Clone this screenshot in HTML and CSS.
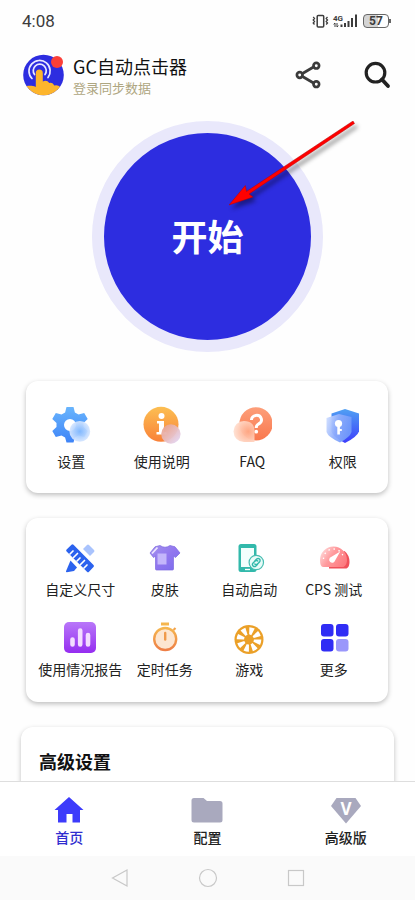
FILE: index.html
```
<!DOCTYPE html>
<html lang="zh-CN">
<head>
<meta charset="utf-8">
<meta name="viewport" content="width=device-width, initial-scale=1">
<title>GC自动点击器</title>
<link rel="stylesheet" href="styles.css">
</head>

<body>
<div class="statusbar">
  <span class="time">4:08</span>
  <div class="status-icons">
    <svg width="48" height="16" viewBox="0 0 48 16">
      <g fill="none" stroke="#3c3c3c">
        <rect x="5.200" y="2.500" width="6.500" height="11.500" rx="1" stroke-width="1.500"/>
        <path d="M1.200 4l1.300 1.500L1.200 7l1.300 1.500L1.200 10l1.300 1.500M15.500 4l-1.300 1.500L15.500 7l-1.300 1.500 1.300 1.500-1.300 1.500" stroke-width="1.300"/>
        <path d="M23 10v4M21.600 11.300L23 10M25 10v4M26.400 12.700L25 14" stroke-width="1"/>
      </g>
      <text class="net" x="21" y="8">4G</text>
      <path d="M28.500 11.500h2V14h-2zM32 10h2v4h-2zM35.500 8h2v6h-2zM39 5h2v9h-2zM43 1.500h2V14h-2z" fill="#3c3c3c"/>
    </svg>
    <span class="battery">57</span>
  </div>
</div>

<main class="content">
  <header class="header">
    <svg class="logo" width="41" height="42" viewBox="0 0 41 42">
      <defs><clipPath id="disc"><circle cx="20.500" cy="21" r="20.300"/></clipPath></defs>
      <circle cx="20.500" cy="21" r="20.300" fill="#2d2de0"/>
      <g fill="none" stroke="#e9e9ff" stroke-width="1.700" stroke-linecap="round">
        <path d="M9 24.500a10.600 10.600 0 1 1 16-1"/>
        <path d="M11.500 20.500a6.500 6.500 0 1 1 10.500 0"/>
      </g>
      <g clip-path="url(#disc)">
        <path d="M0 42V33c4-1 8-2 12.800 0V19a3.500 3.500 0 0 1 7 0v8.500q4-2 6.500 1.500 3.500-1 5 2.500 3.500-1 6 1.500V42z" fill="#fdb52c"/>
      </g>
      <circle cx="34" cy="8" r="6" fill="#fb3f38"/>
    </svg>
    <div class="account">
      <h1>GC自动点击器</h1>
      <a href="#">登录同步数据</a>
    </div>
    <button class="icon-btn" aria-label="分享">
      <svg width="28" height="28" viewBox="0 0 28 28" fill="none" stroke="#3b3b3b" stroke-width="2.700">
        <path d="M8.500 12.500l11-6.500M8.500 15.500l11 6.500"/>
        <circle cx="5.700" cy="14" r="2.800"/><circle cx="22.300" cy="4.700" r="2.800"/><circle cx="22.300" cy="23.200" r="2.800"/>
      </svg>
    </button>
    <button class="icon-btn" aria-label="搜索">
      <svg width="28" height="28" viewBox="0 0 28 28" fill="none" stroke="#222">
        <circle cx="12.500" cy="11.700" r="9.300" stroke-width="3.200"/>
        <path d="M19 18.500l6 6.500" stroke-width="3.800" stroke-linecap="round"/>
      </svg>
    </button>
  </header>

  <div class="start-area">
    <button class="start">开始</button>
    <svg class="pointer" width="136" height="96" viewBox="0 0 136 96">
      <path d="M124 0L17.500 70.500l-1.200-6L0 84l24-8-4-3L125.500 2.500z" fill="#f00" stroke="#b40000" stroke-width=".5"/>
    </svg>
  </div>

  <nav class="card tools">
    <a href="#" class="item">
      <svg width="40" height="40" viewBox="0 0 40 40">
        <defs>
          <linearGradient id="gear" gradientUnits="userSpaceOnUse" x1="0" y1="3" x2="0" y2="39"><stop stop-color="#69b5fd"/><stop offset="1" stop-color="#3d83f7"/></linearGradient>
          <radialGradient id="gearBlob"><stop stop-color="#85bbff"/><stop offset="1" stop-color="#d6e6ff"/></radialGradient>
        </defs>
        <path fill="url(#gear)" fill-rule="evenodd" d="M15.500 3h7l1.400 5.500 3.600 2.100 5.700-1.700 3.500 6.100-4.200 4v4l4.200 4-3.500 6.100-5.700-1.600-3.600 2.100-1.400 4.900h-7l-1.400-4.900-3.600-2.100-5.700 1.600L1.300 27l4.200-4v-4l-4.200-4 3.500-6.100 5.700 1.700 3.600-2.100zM19 15a6 6 0 1 0 0 12 6 6 0 0 0 0-12z"/>
        <circle cx="28.800" cy="27.400" r="10.400" fill="url(#gearBlob)" opacity=".94"/>
      </svg>
      <span>设置</span>
    </a>
    <a href="#" class="item">
      <svg width="40" height="40" viewBox="0 0 40 40">
        <defs>
          <linearGradient id="info" x2="0" y2="1"><stop stop-color="#fcbf52"/><stop offset="1" stop-color="#f98138"/></linearGradient>
          <linearGradient id="infoBlob" x2="1" y2="1"><stop stop-color="#eb9d82"/><stop offset="1" stop-color="#e3dcff"/></linearGradient>
        </defs>
        <circle cx="19" cy="20.300" r="17.500" fill="url(#info)"/>
        <circle cx="19.500" cy="12" r="3" fill="#fff"/>
        <path d="M15 17h7v11h2.500v2.500H14.500V28H17v-8.500h-2z" fill="#fff"/>
        <circle cx="28.900" cy="30" r="9.700" fill="url(#infoBlob)" opacity=".95"/>
      </svg>
      <span>使用说明</span>
    </a>
    <a href="#" class="item">
      <svg width="40" height="40" viewBox="0 0 40 40">
        <defs>
          <linearGradient id="faq" x2="0" y2="1"><stop stop-color="#fd9f7a"/><stop offset="1" stop-color="#f9784e"/></linearGradient>
          <radialGradient id="faqBlob" cx=".7" cy=".5" r=".7"><stop stop-color="#ffa784"/><stop offset="1" stop-color="#ffe1d3"/></radialGradient>
        </defs>
        <circle cx="24" cy="19.800" r="16.600" fill="url(#faq)"/>
        <path d="M19.500 16a5 4.500 0 1 1 7 4q-2.300 1.200-2.300 4" fill="none" stroke="#fff" stroke-width="3"/>
        <circle cx="24.200" cy="27.700" r="1.900" fill="#fff"/>
        <path d="M12 17q10.500 0 10.500 10.500V38H12A10.500 10.500 0 0 1 12 17z" fill="url(#faqBlob)" opacity=".96"/>
      </svg>
      <span>FAQ</span>
    </a>
    <a href="#" class="item">
      <svg width="40" height="40" viewBox="0 0 40 40">
        <defs>
          <linearGradient id="shield" x2="0" y2="1"><stop stop-color="#50a0f3"/><stop offset="1" stop-color="#3c3efc"/></linearGradient>
          <linearGradient id="shieldFront" x2="1" y2=".3"><stop stop-color="#d5e2ff"/><stop offset=".5" stop-color="#8eadfc"/><stop offset="1" stop-color="#719afa"/></linearGradient>
        </defs>
        <path d="M22 5l14 4.500v18Q34 33 22 39 10 33 8.500 27.500v-18z" fill="url(#shield)"/>
        <path d="M16 10l12.500 3v15Q27 33 17 38.500 5 33 3.500 28V14z" fill="url(#shieldFront)" opacity=".95"/>
        <circle cx="15.500" cy="19.500" r="3.600" fill="#fff"/>
        <path d="M14.300 22h2.600v3h1.900v2h-1.900v3.500h-2.600z" fill="#fff"/>
      </svg>
      <span>权限</span>
    </a>
  </nav>

  <nav class="card features">
    <a href="#" class="item">
      <svg width="34" height="34" viewBox="0 0 34 34">
        <path d="M20 8l4-4q1-1 2 0l5 5q1 1 0 2l-4 4z" fill="#a9c3fd"/>
        <path d="M7.500 19.500l6.500 7-3 3.500-7.200 1.200q-1 0-.8-1z" fill="#2b62ee"/>
        <path d="M8.500 3.700q1-1 2 0L30.500 24q1 1 0 2l-4.500 4.700q-1 1-2 0L3.600 10.400q-1-1 0-2z" fill="#2b62ee"/>
        <path d="M7 13l3-3M10.500 16.500l4-4M14 20l3-3M17.500 23.500l4-4M21 27l3-3" stroke="#fff" stroke-width="1.700" stroke-linecap="round"/>
      </svg>
      <span>自定义尺寸</span>
    </a>
    <a href="#" class="item">
      <svg width="34" height="34" viewBox="0 0 34 34">
        <defs><linearGradient id="shirt" x2="1" y2="1"><stop stop-color="#a493ee"/><stop offset=".5" stop-color="#9277ef"/><stop offset="1" stop-color="#796bed"/></linearGradient></defs>
        <path d="M12 4.500q5 3.500 10 0l5 1.300 5 6.200-4.500 4.500-2-1.500V28q0 1-1 1h-16q-1 0-1-1V15l-2 1.500L2 12l5-6.200z" fill="url(#shirt)" stroke="#7d68df" stroke-width=".7"/>
        <path d="M4 12.500l5.500-6" stroke="#eee7ff" stroke-width="1.800"/>
        <rect x="9.500" y="12.500" width="9" height="11" fill="#c4b6fb"/>
      </svg>
      <span>皮肤</span>
    </a>
    <a href="#" class="item">
      <svg width="34" height="34" viewBox="0 0 34 34">
        <rect x="6.500" y="3" width="18" height="28" rx="2.500" fill="#32b9ab"/>
        <rect x="9" y="7" width="13" height="19" fill="#f2fffd"/>
        <path d="M13 28.500h5" stroke="#fff" stroke-width="1.300"/>
        <circle cx="24.300" cy="21.500" r="7.200" fill="#e8fbf8" stroke="#48bdb1" stroke-width="1.200"/>
        <g fill="none" stroke="#32b9ab" stroke-width="1.400" stroke-linecap="round">
          <path d="M23.200 19.600l1.500-1.500a1.900 1.900 0 0 1 2.800 2.800l-2 2a1.900 1.900 0 0 1-2.700 0"/>
          <path d="M25.400 23.400l-1.500 1.500a1.900 1.900 0 0 1-2.800-2.800l2-2a1.900 1.900 0 0 1 2.700 0"/>
        </g>
      </svg>
      <span>自动启动</span>
    </a>
    <a href="#" class="item">
      <svg width="34" height="34" viewBox="0 0 34 34">
        <defs><linearGradient id="gauge" x1="0" y1=".2" x2="1" y2=".7"><stop stop-color="#ffdcdc"/><stop offset=".45" stop-color="#ff9a9d"/><stop offset="1" stop-color="#fd7a7f"/></linearGradient></defs>
        <path d="M12 27.500V20l15.500-10Q32.500 14 32.500 21q0 5-3 6.500z" fill="#f0505a"/>
        <path d="M6 26Q3 26 3 19a13.500 13.500 0 0 1 27 0q0 5-3.500 7z" fill="url(#gauge)"/>
        <path d="M6.500 18a10 10 0 0 1 20 0" fill="none" stroke="#fff" stroke-width="1.300" stroke-dasharray="1.500 3.700"/>
        <path d="M23.200 10.500l-5.100 9a3 3 0 1 1-4-3.500z" fill="#fff"/>
      </svg>
      <span>CPS 测试</span>
    </a>
    <a href="#" class="item">
      <svg width="34" height="34" viewBox="0 0 34 34">
        <defs><linearGradient id="chart" x2="0" y2="1"><stop stop-color="#b877f9"/><stop offset="1" stop-color="#952df0"/></linearGradient></defs>
        <rect x="1" y="1" width="32" height="31" rx="5" fill="url(#chart)"/>
        <path d="M9.500 18.500v5M17.200 9.500v14M25 14v9.500" stroke="#f3ddff" stroke-width="4.600" stroke-linecap="round"/>
      </svg>
      <span>使用情况报告</span>
    </a>
    <a href="#" class="item">
      <svg width="34" height="34" viewBox="0 0 34 34">
        <defs><linearGradient id="timer" x2="0" y2="1"><stop stop-color="#f5b64f"/><stop offset="1" stop-color="#ee7f46"/></linearGradient></defs>
        <path d="M13 1.500h8v3h-8z" fill="#f5b64f"/>
        <path d="M25.500 9l2-2" stroke="#f3a34b" stroke-width="2.200"/>
        <circle cx="17.200" cy="18" r="11" fill="#fde6d1" stroke="url(#timer)" stroke-width="2.400"/>
        <path d="M17.200 12v6.500" stroke="#f09a4b" stroke-width="2.400" stroke-linecap="round"/>
      </svg>
      <span>定时任务</span>
    </a>
    <a href="#" class="item">
      <svg width="34" height="34" viewBox="0 0 34 34">
        <circle cx="17" cy="18.500" r="14.500" fill="#eba028"/>
        <circle cx="17" cy="18.500" r="8.600" fill="none" stroke="#fff" stroke-width="7.400" stroke-dasharray="3.900 2.854"/>
        <circle cx="17" cy="18.500" r="4" fill="#eba028"/>
        <path d="M17 13l1.500 3h-3z" fill="#eba028"/>
      </svg>
      <span>游戏</span>
    </a>
    <a href="#" class="item">
      <svg width="34" height="34" viewBox="0 0 34 34" fill="#302df5">
        <rect x="4" y="3" width="12.500" height="12.500" rx="3"/>
        <rect x="19" y="3" width="12.500" height="12.500" rx="3"/>
        <rect x="4" y="18" width="12.500" height="12.500" rx="3"/>
        <rect x="19" y="18" width="12.500" height="12.500" rx="3" fill="#9a97fb"/>
      </svg>
      <span>更多</span>
    </a>
  </nav>

  <section class="card advanced">
    <h2>高级设置</h2>
  </section>
</main>

<nav class="tabbar">
  <a href="#" class="item current">
    <svg width="32" height="32" viewBox="0 0 32 32">
      <path d="M16 3l14.500 13H27v12.500h-7.500V20h-6v8.500H5V16H1.500z" fill="#3d3bfb"/>
    </svg>
    <span>首页</span>
  </a>
  <a href="#" class="item">
    <svg width="32" height="32" viewBox="0 0 32 32">
      <path d="M3 4h9.500l3.500 3h13q2.500 0 2.500 2.500V26q0 2.500-2.500 2.500H3Q.5 28.500.5 26V6.500Q.5 4 3 4z" fill="#a9a9be"/>
    </svg>
    <span>配置</span>
  </a>
  <a href="#" class="item">
    <svg width="32" height="32" viewBox="0 0 32 32">
      <path d="M6.500 4h19l5.500 8-15 17.500L1 12z" fill="#a9a9be"/>
      <text class="vip" x="16" y="21">V</text>
    </svg>
    <span>高级版</span>
  </a>
</nav>

<div class="sysnav">
  <button aria-label="返回"><svg width="20" height="20" viewBox="0 0 20 20"><path d="M17 2v16L2.500 10z"/></svg></button>
  <button aria-label="主屏幕"><svg width="20" height="20" viewBox="0 0 20 20"><circle cx="10" cy="10" r="8.500"/></svg></button>
  <button aria-label="最近任务"><svg width="20" height="20" viewBox="0 0 20 20"><rect x="2.500" y="2.500" width="15" height="15"/></svg></button>
</div>
</body>
</html>
```
FILE: styles.css
```
*{ padding:0; margin:0; box-sizing:border-box;}
body{
	height:100vh;
	display:flex;
	flex-direction:column;
	overflow:hidden;
	background:#fefefe;
	color:#222;
	font-family:"Noto Sans CJK SC",sans-serif;
	font-size:14px;
	line-height:20px;
}
a{ color:inherit; text-decoration:none;}
button{ border:0; background:none; font-family:inherit; cursor:pointer;}
svg{ display:block; flex:none;}

/* 状态栏 */
.statusbar{
	flex:none;
	height:40px;
	padding:2px 26px 0 22px;
	display:flex;
	align-items:center;
	justify-content:space-between;
}
.time{ font-family:Roboto,sans-serif; font-size:17px; color:#3c3c3c;}
.status-icons{ display:flex; align-items:center; gap:3px;}
.net{ font-family:Roboto,sans-serif; font-size:8px; font-weight:bold; fill:#3c3c3c;}
.battery{
	position:relative;
	width:26px;
	height:14px;
	border:1px solid #666;
	border-radius:4px;
	background:linear-gradient(to right,#d4d4d4 57%,#fefefe 57%);
	font-family:Roboto,sans-serif;
	font-size:12px;
	font-weight:bold;
	line-height:12px;
	text-align:center;
	color:#3c3c3c;
}
.battery::after{ content:""; position:absolute; right:-3px; top:4px; width:2px; height:4px; background:#666;}

/* 内容区 */
.content{ flex:1; min-height:0; overflow:hidden;}
.header{
	display:flex;
	align-items:center;
	padding:13px 24px 0 23px;
}
.account{ flex:1; margin-left:9px;}
.account h1{ font-size:18px; font-weight:normal; line-height:26px; color:#111;}
.account a{ display:block; font-size:13px; line-height:18px; color:#aea681;}
.icon-btn + .icon-btn{ margin-left:41px;}

.start-area{
	position:relative;
	display:flex;
	justify-content:center;
	margin:24px 0 29px;
}
.start{
	width:231px;
	height:231px;
	border:12px solid #e9e8fb;
	border-radius:50%;
	padding-bottom:4px;
	background:#2d2de0;
	color:#fff;
	font-size:36px;
	font-weight:bold;
}
.pointer{ position:absolute; left:50%; top:0; margin-left:21px; filter:drop-shadow(3px 4px 2px rgba(0,0,0,.4)); pointer-events:none;}

.card{
	margin:0 27px 25px 26px;
	border-radius:12px;
	background:#fff;
	box-shadow:0 2px 5px rgba(0,0,0,.25);
}
.item{
	display:flex;
	flex-direction:column;
	align-items:center;
	white-space:nowrap;
}
.tools{
	display:grid;
	grid-template-columns:repeat(4,1fr);
	padding:23px 0 22px;
}
.tools .item{ gap:7px;}
.features{
	display:grid;
	grid-template-columns:repeat(4,1fr);
	row-gap:22px;
	padding:23px 12px;
}
.features .item{ gap:4px;}
.advanced{ margin:0 21px; padding:22px 18px; height:200px;}
.advanced h2{ font-size:18px; line-height:24px; color:#111;}

/* 底部导航 */
.tabbar{
	flex:none;
	position:relative;
	display:grid;
	grid-template-columns:repeat(3,1fr);
	padding:12px 0 9px;
	border-top:1px solid #dedede;
	background:#fff;
}
.tabbar .item{ gap:1px; font-weight:500;}
.tabbar .current{ color:#2f2dcf;}
.vip{ font-family:"Open Sans",sans-serif; font-size:17px; font-weight:bold; fill:#fff; text-anchor:middle;}
.sysnav{
	flex:none;
	height:44px;
	display:flex;
	align-items:center;
	justify-content:center;
	gap:68px;
	background:#fafafa;
}
.sysnav svg{ fill:none; stroke:#c8c8c8; stroke-width:1.2;}
```
